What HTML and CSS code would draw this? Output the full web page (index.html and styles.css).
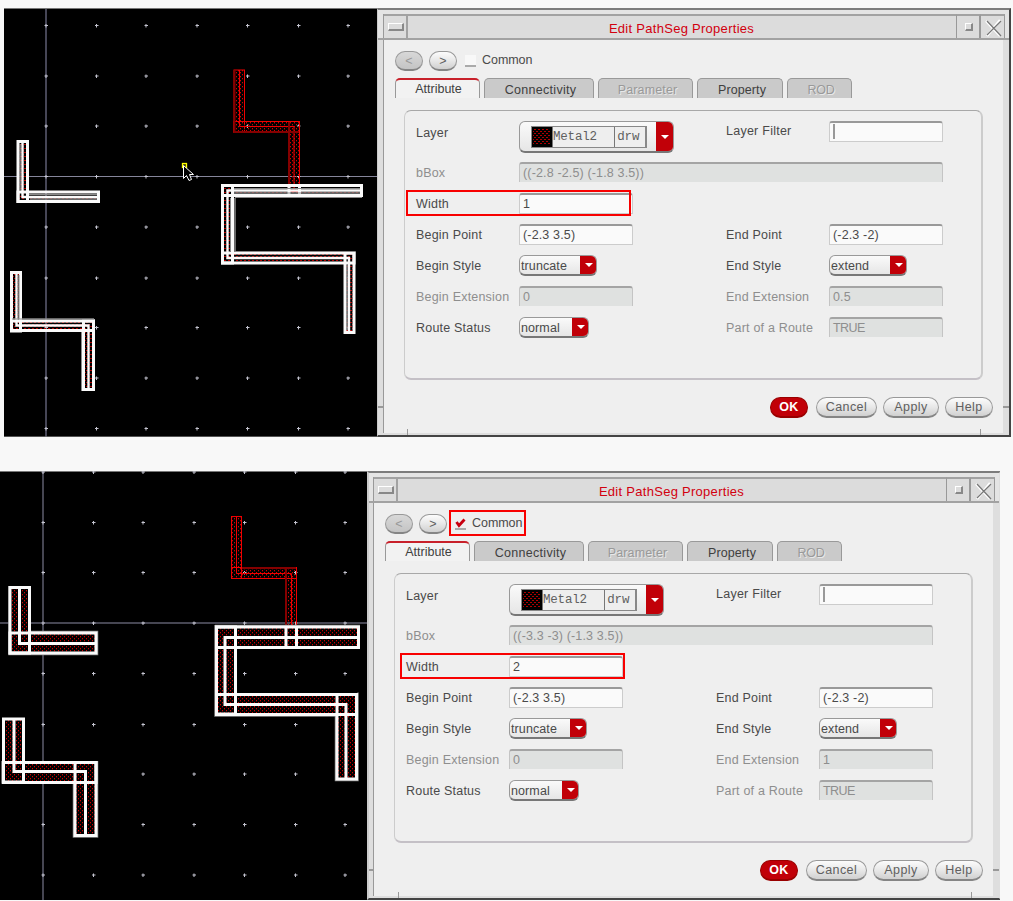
FILE: index.html
```
<!DOCTYPE html>
<html lang="en">
<head>
<meta charset="utf-8">
<title>Edit PathSeg Properties</title>
<link rel="stylesheet" href="styles.css">
</head>
<body>
<svg class="defs" width="0" height="0">
  <defs>
    <pattern id="hatch" width="4" height="4" patternUnits="userSpaceOnUse">
      <path d="M0 0h1v1h-1zM2 2h1v1h-1z" fill="#d00000"/>
      <path d="M0 1h1v1h-1zM2 3h1v1h-1z" fill="#400"/>
    </pattern>
    <pattern id="hatch-dim" width="4" height="4" patternUnits="userSpaceOnUse">
      <path d="M0 0h2v1h-2zM2 2h2v1h-2z" fill="#b00000"/>
    </pattern>
    <path id="dot" d="M-1.5 -.5h3.5v1h-3.5zM-.5 -1.5h1v3.5h-1z" fill="#c4c4d0"/>
    <g id="dots">
      <use href="#dot" x=".5"/><use href="#dot" x="51"/><use href="#dot" x="100.5"/><use href="#dot" x="151.5"/><use href="#dot" x="202"/><use href="#dot" x="253"/><use href="#dot" x="302.5"/>
    </g>
    <g id="narrow-paths">
      <rect x="18" y="141.5" width="9.5" height="60"/>
      <rect x="18" y="192" width="80.5" height="9.5"/>
      <path class="mid" d="M22.5 142V197H97" fill="none"/>
      <path class="ghost" d="M20 144V191M30 199H97M29 194.5H97" fill="none"/>
      <rect x="222.5" y="185.5" width="139" height="10"/>
      <rect x="222.5" y="185.5" width="10" height="77.5"/>
      <rect x="222.5" y="253" width="131.5" height="10"/>
      <rect x="345" y="253" width="9" height="79.5"/>
      <path d="M289 185V196M299.5 185V196" fill="none"/>
      <path class="mid" d="M361 190.5H227.5V258H349V332" fill="none"/>
      <path class="ghost" d="M235 198V251M235 197.5H362M234 188.5H360M234 193H360M235 251.5H355M230.5 198V251M347 265V330" fill="none"/>
      <rect x="11.5" y="272.5" width="9" height="58.5"/>
      <rect x="11.5" y="321" width="82" height="9.5"/>
      <rect x="83.5" y="321" width="10" height="68.5"/>
      <path class="mid" d="M16.5 273V325.5H88.5V389" fill="none"/>
      <path class="ghost" d="M19 275V319M12 319H94M81.5 332V391" fill="none"/>
    </g>
    <g id="wide-paths">
      <rect x="10" y="587.5" width="19.5" height="65.5"/>
      <rect x="10" y="633" width="86" height="20"/>
      <path d="M19.5 588V643.5H95" fill="none"/>
      <rect x="216.5" y="627" width="142" height="20.5"/>
      <rect x="216.5" y="627" width="19" height="87"/>
      <rect x="216.5" y="694.5" width="140" height="20"/>
      <rect x="337" y="694.5" width="19.5" height="84.5"/>
      <path d="M286 627V646M296.5 627V646M358 637.5H225V704.5H346V779" fill="none"/>
      <rect x="3.5" y="719" width="20" height="63"/>
      <rect x="3.5" y="762.5" width="92.5" height="20"/>
      <rect x="75" y="762.5" width="21" height="73"/>
      <path d="M14 719V771.5H85.5V835" fill="none"/>
    </g>
  </defs>
</svg>

<section class="shot first">
  <svg class="canvas" width="373" height="429" viewBox="4 8 373 429">
    <rect x="4" y="8" width="373" height="429" fill="#000"/>
    <path d="M46 9V437" stroke="#464656" stroke-width="2"/>
    <path d="M4 176.5H377" stroke="#85859a"/>
    <use href="#dots" x="45.5" y="25.5"/><use href="#dots" x="45.5" y="76"/><use href="#dots" x="45.5" y="126"/><use href="#dots" x="45.5" y="176.5"/><use href="#dots" x="45.5" y="227"/><use href="#dots" x="45.5" y="278"/><use href="#dots" x="45.5" y="327.5"/><use href="#dots" x="45.5" y="378"/><use href="#dots" x="45.5" y="428.5"/>
    <g class="seg-red" fill="url(#hatch)">
      <rect x="234" y="70" width="10.5" height="62"/>
      <rect x="234" y="121.5" width="65.5" height="11"/>
      <rect x="288.5" y="121.5" width="11" height="70"/>
      <path d="M239.5 70V126.5H294V190" fill="none"/>
      <path class="dark-edge" d="M234.5 70V132H299M289 122V185" fill="none"/>
    </g>
    <use href="#narrow-paths" fill="url(#hatch-dim)"/>
    <use href="#narrow-paths" class="seg-white" fill="none"/>
    <rect x="182.5" y="163.5" width="4" height="4" fill="#333300" stroke="#ff0" stroke-width="1.3"/>
    <path d="M183.5 165.5V178.5L186.5 175.5L189 180.5L191.5 179.5L189.5 174.5H193.5Z" fill="#000" stroke="#fff"/>
    <path d="M4 8.5H377M4 436.8H377" stroke="#777"/>
  </svg>
  <div class="dialog">
    <header class="titlebar">
      <span class="corner"></span>
      <span class="winmenu"><i></i></span>
      <h1>Edit PathSeg Properties</h1>
      <span class="winmax"><i></i></span>
      <span class="winclose"><svg width="18" height="18" viewBox="0 0 18 18"><path d="M1 2l14 15M15 1L2 17" stroke="#fff" stroke-width="2.5"/><path d="M2 2l14 15M16 2L2 16" stroke="#777" stroke-width="1.3"/></svg></span>
      <span class="corner"></span>
    </header>
    <div class="panel">
      <div class="nav">
        <button class="arrow off">&lt;</button><button class="arrow">&gt;</button>
        <span class="check"></span><span class="t-common">Common</span>
      </div>
      <div class="tabs">
        <span class="tab active">Attribute</span><span class="tab conn">Connectivity</span><span class="tab param off">Parameter</span><span class="tab prop">Property</span><span class="tab rod off">ROD</span>
      </div>
      <div class="group">
        <label class="layer-l">Layer</label>
        <div class="combo layer"><span class="layerbox"><svg width="20" height="20"><rect width="20" height="20" fill="#000"/><rect x="1" y="2" width="17" height="16" fill="url(#hatch-dim)"/></svg><b>Metal2</b><b class="drw">drw</b></span><i></i></div>
        <label class="filter-l">Layer Filter</label><div class="field"><span class="caret"></span></div>
        <label class="off">bBox</label><div class="field off wide">((-2.8 -2.5) (-1.8 3.5))</div>
        <label>Width</label><div class="field span">1</div>
        <label>Begin Point</label><div class="field">(-2.3 3.5)</div>
        <label>End Point</label><div class="field">(-2.3 -2)</div>
        <label>Begin Style</label><div class="combo">truncate<i></i></div>
        <label>End Style</label><div class="combo">extend<i></i></div>
        <label class="off">Begin Extension</label><div class="field off">0</div>
        <label class="off">End Extension</label><div class="field off">0.5</div>
        <label>Route Status</label><div class="combo short">normal<i></i></div>
        <label class="off">Part of a Route</label><div class="field off caps">TRUE</div>
      </div>
      <div class="actions">
        <button class="ok">OK</button><button class="cancel">Cancel</button><button class="apply">Apply</button><button class="help">Help</button>
      </div>
    </div>
    <span class="notch left"></span><span class="notch right"></span><span class="notch foot-a"></span><span class="notch foot-b"></span>
    <span class="mark width-a"></span>
  </div>
</section>

<section class="shot second">
  <svg class="canvas" width="367" height="429" viewBox="0 471 367 429">
    <rect x="0" y="471" width="367" height="429" fill="#000"/>
    <path d="M43 472V900M0 623H367" stroke="#464652" stroke-width="2"/>
    <path d="M0 471.5H367" stroke="#777"/>
    <use href="#dots" x="42.5" y="472"/><use href="#dots" x="42.5" y="522.5"/><use href="#dots" x="42.5" y="572.5"/><use href="#dots" x="42.5" y="623"/><use href="#dots" x="42.5" y="673.5"/><use href="#dots" x="42.5" y="724.5"/><use href="#dots" x="42.5" y="774"/><use href="#dots" x="42.5" y="824.5"/><use href="#dots" x="42.5" y="875"/>
    <g class="seg-red" fill="url(#hatch)">
      <rect x="231.5" y="516.5" width="10" height="62"/>
      <rect x="231.5" y="567.5" width="65" height="11"/>
      <rect x="285.5" y="567.5" width="11" height="60"/>
      <path d="M236.5 516V573.5H291.5V637" fill="none"/>
      <path class="dark-edge" d="M242 568H296M286 569V626" fill="none"/>
    </g>
    <use href="#wide-paths" fill="#000"/>
    <use href="#wide-paths" fill="url(#hatch)"/>
    <path class="halo" d="M9 586V654.5H97.5V631.5H31M215 625.5H360M215 625V716H335M358 692.5V780.5H335.5V716M2 761V783H73.5V837H97.5V761" fill="none"/>
    <use href="#wide-paths" class="seg-white" fill="none"/>
  </svg>
  <div class="dialog">
    <header class="titlebar">
      <span class="corner"></span>
      <span class="winmenu"><i></i></span>
      <h1>Edit PathSeg Properties</h1>
      <span class="winmax"><i></i></span>
      <span class="winclose"><svg width="18" height="18" viewBox="0 0 18 18"><path d="M1 2l14 15M15 1L2 17" stroke="#fff" stroke-width="2.5"/><path d="M2 2l14 15M16 2L2 16" stroke="#777" stroke-width="1.3"/></svg></span>
      <span class="corner"></span>
    </header>
    <div class="panel">
      <div class="nav">
        <button class="arrow off">&lt;</button><button class="arrow">&gt;</button>
        <span class="check"><svg width="11" height="10" viewBox="0 0 11 10"><path d="M1.5 4l2.5 3.5L9.5 1.5" fill="none" stroke="#c80010" stroke-width="2.8"/></svg></span><span class="t-common">Common</span>
      </div>
      <div class="tabs">
        <span class="tab active">Attribute</span><span class="tab conn">Connectivity</span><span class="tab param off">Parameter</span><span class="tab prop">Property</span><span class="tab rod off">ROD</span>
      </div>
      <div class="group">
        <label class="layer-l">Layer</label>
        <div class="combo layer"><span class="layerbox"><svg width="20" height="20"><rect width="20" height="20" fill="#000"/><rect x="1" y="2" width="17" height="16" fill="url(#hatch-dim)"/></svg><b>Metal2</b><b class="drw">drw</b></span><i></i></div>
        <label class="filter-l">Layer Filter</label><div class="field"><span class="caret"></span></div>
        <label class="off">bBox</label><div class="field off wide">((-3.3 -3) (-1.3 3.5))</div>
        <label>Width</label><div class="field span">2</div>
        <label>Begin Point</label><div class="field">(-2.3 3.5)</div>
        <label>End Point</label><div class="field">(-2.3 -2)</div>
        <label>Begin Style</label><div class="combo">truncate<i></i></div>
        <label>End Style</label><div class="combo">extend<i></i></div>
        <label class="off">Begin Extension</label><div class="field off">0</div>
        <label class="off">End Extension</label><div class="field off">1</div>
        <label>Route Status</label><div class="combo short">normal<i></i></div>
        <label class="off">Part of a Route</label><div class="field off caps">TRUE</div>
      </div>
      <div class="actions">
        <button class="ok">OK</button><button class="cancel">Cancel</button><button class="apply">Apply</button><button class="help">Help</button>
      </div>
    </div>
    <span class="notch left"></span><span class="notch right"></span><span class="notch foot-a"></span><span class="notch foot-b"></span>
    <span class="mark common"></span>
    <span class="mark width-b"></span>
  </div>
</section>
</body>
</html>
```
FILE: styles.css
```
* { box-sizing: border-box; }
body {
  margin: 0;
  height: 901px;
  overflow: hidden;
  background: #f8f8f8;
  font: 12.5px/20px "Liberation Sans", Arial, sans-serif;
  color: #4a4a4a;
}
.defs { position: absolute; }
.shot { display: flex; align-items: flex-start; }
.first { padding: 8px 0 0 4px; height: 471px; }
.second { width: 1000px; overflow: hidden; }
.canvas { display: block; flex: none; }

.seg-red { stroke: #f00000; stroke-width: 1; }
.seg-red .dark-edge { stroke: #850000; stroke-width: 2; }
.seg-white { stroke: #fafafa; stroke-width: 3; }
.mid { stroke-width: 2.4px; }
.ghost { stroke: #8a8a8a; stroke-width: 1px; }
.halo { stroke: #8a8a8a; stroke-width: 1.5px; }

.dialog {
  position: relative;
  flex: none;
  width: 634px;
  height: 429px;
  border-top: 2px solid #7c7c7c;
  border-right: 2px solid #444;
  border-bottom: 2px solid #444;
  border-left: 1px solid #ccc;
  background: #dedede;
}
.second .dialog { border-left-width: 2px; border-right-color: #dedede; }
.titlebar {
  display: flex;
  height: 30px;
  padding-top: 4px;
  border-bottom: 2px solid #a2a2a2;
  background: #e4e4e4;
}
.corner { flex: none; width: 4px; }
.titlebar > .corner:first-child { border-right: 1px solid #999; width: 6px; }
.second .titlebar > .corner:first-child { width: 5px; }
.titlebar > :not(.corner) { border-top: 2px solid #a2a2a2; background: #dcdcdc; }
.titlebar h1 {
  flex: 1;
  margin: 0;
  padding-right: 1px;
  font-size: 13px;
  font-weight: 400;
  line-height: 26px;
  text-align: center;
  letter-spacing: .28px;
  color: #d2000f;
}
.winmenu { width: 24px; border-right: 2px solid #a2a2a2; }
.winmenu i {
  display: block;
  width: 16px;
  height: 8px;
  margin: 7px 0 0 4px;
  border: 1px solid #fff;
  border-right: 2px solid #888;
  border-bottom: 2px solid #888;
}
.winmax { width: 25px; border-left: 1px solid #999; border-right: 2px solid #999; }
.winmax i {
  display: block;
  width: 8px;
  height: 8px;
  margin: 7px 0 0 8px;
  border: 1px solid #fff;
  border-right: 2px solid #888;
  border-bottom: 2px solid #888;
}
.winclose { width: 24px; border-right: 1px solid #999; }
.winclose svg { display: block; margin: 3px 0 0 4px; }

.panel {
  height: 393px;
  margin: 0 6px 0 5px;
  padding: 11px 0 0 11px;
  border-left: 1px solid #999;
  background: #efefef;
}
.second .panel { margin-left: 4px; }
.nav { display: flex; height: 20px; align-items: flex-start; }
button {
  font: inherit;
  padding: 0;
  border: 1px solid #999;
  border-bottom: 2px solid #858585;
  border-radius: 11px;
  color: #606060;
  background: linear-gradient(#fcfcfc, #e8e8e8 50%, #d0d0d0);
}
.arrow { width: 28px; height: 20px; margin-right: 6px; line-height: 18px; }
.arrow.off { color: #999; background: linear-gradient(#d8d8d8, #c4c4c4); }
.check {
  width: 11px;
  height: 12px;
  margin: 4px 6px 0 2px;
  border-bottom: 2px solid #aaa;
  background: #f8f8f8;
}
.check svg { display: block; }
.second .check { background: none; }
.t-common { line-height: 19px; letter-spacing: -.05px; }

.tabs { display: flex; gap: 4px; height: 20px; margin-top: 7px; }
.tab {
  border: 1px solid #999;
  border-bottom: 0;
  border-radius: 5px 5px 0 0;
  background: #cacaca;
  line-height: 22px;
  text-align: center;
  color: #404040;
}
.tab.active { width: 85px; background: #f2f2f2; border-top: 2px solid #c8202a; line-height: 18px; padding-left: 2px; }
.conn { width: 110px; padding-left: 3px; letter-spacing: .3px; }
.param { width: 95px; padding-left: 4px; letter-spacing: .15px; }
.prop { width: 86px; padding-left: 4px; letter-spacing: .1px; }
.rod { width: 65px; padding-left: 3px; letter-spacing: -.3px; }
.off { color: #8e8e8e; }
.tab.off { color: #999; text-shadow: 1px 1px 0 #e8e8e8; }

.group {
  display: grid;
  grid-template-columns: 103px 207px 103px 114px;
  grid-template-rows: 41px repeat(6, 31px);
  align-items: start;
  width: 579px;
  height: 270px;
  margin: 12px 0 0 9px;
  padding: 10px 0 0 11px;
  border: 1px solid #a8a8a8;
  border-left-color: #ccc;
  border-right: 2px solid #ccc;
  border-bottom: 2px solid #c4c0c6;
  border-radius: 7px;
}
label { line-height: 22px; letter-spacing: .2px; white-space: nowrap; }
.layer-l { line-height: 25px; }
.filter-l { line-height: 21px; letter-spacing: .25px; }
.field {
  width: 114px;
  height: 21px;
  padding-left: 3px;
  border: 1px solid #ccc;
  border-top: 2px solid #999;
  border-radius: 3px 3px 0 0;
  background: #fafafa;
  line-height: 19px;
  letter-spacing: .15px;
  white-space: nowrap;
}
.field.off { background: #dfe1e0; border-bottom: 0; border-color: #a4a4a4 #c4c4c4; height: 20px; }
.field.caps { letter-spacing: -.6px; }
.field.wide { grid-column: 2 / 5; width: 424px; }
.field.span { grid-column-end: span 3; }
.caret { display: block; width: 2px; height: 15px; margin: 1px 0 0 0; background: #999; }
.combo {
  display: flex;
  justify-content: space-between;
  width: 78px;
  height: 21px;
  padding-left: 1px;
  border: 1px solid #999;
  border-bottom: 2px solid #777;
  border-radius: 6px;
  background: linear-gradient(#fafafa, #e6e6e6);
  line-height: 20px;
  letter-spacing: .1px;
  overflow: hidden;
}
.combo.short { width: 70px; }
.combo > i { flex: none; display: flex; align-items: center; justify-content: center; width: 17px; margin-right: -1px; background: #c10008; }
.combo > i::before { content: ""; border: 4px solid transparent; border-top-color: #fff; border-bottom: 0; }
.combo.layer { width: 155px; height: 32px; padding: 4px 0 0 11px; }
.combo.layer > i { margin-top: -4px; width: 18px; }
.layerbox { display: flex; width: 116px; height: 22px; border: 2px solid #888; border-width: 1px 2px 1px 1px; background: #eee; }
.layerbox svg { flex: none; }
.layerbox b {
  width: 63px;
  border-left: 1px solid #777;
  font: 12.5px/20px "Liberation Mono", monospace;
  letter-spacing: -.2px;
  color: #606060;
}
.layerbox .drw { width: 31px; padding-left: 2px; }

.actions { display: flex; margin: 17px 0 0 375px; }
.actions button { height: 21px; line-height: 19px; letter-spacing: .4px; }
.actions .ok { width: 38px; margin-right: 8px; color: #fff; font-weight: 700; background: #c10008; border-color: #900; }
.cancel { width: 61px; margin-right: 6px; }
.apply { width: 56px; margin-right: 6px; }
.help { width: 48px; }

.notch { position: absolute; background: #999; }
.left { left: 0; top: 396px; width: 5px; height: 2px; }
.right { right: 0; top: 396px; width: 6px; height: 2px; }
.foot-a { left: 29px; bottom: 0; width: 1px; height: 6px; }
.foot-b { left: 602px; bottom: 0; width: 1px; height: 6px; }
.mark { position: absolute; border: 2px solid #f80000; }
.width-a { left: 28px; top: 180px; width: 225px; height: 26px; }
.width-b { left: 31px; top: 180px; width: 225px; height: 26px; }
.common { left: 80px; top: 37px; width: 77px; height: 26px; }
```
